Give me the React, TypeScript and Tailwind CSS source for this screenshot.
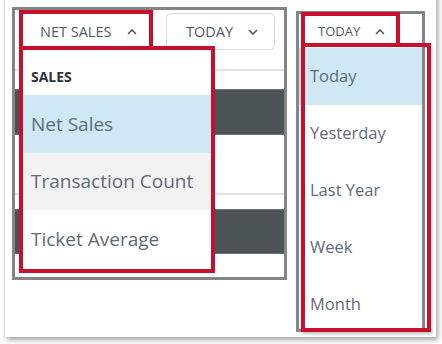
const RED = "border-[#c8102e]";

function ChevronUp({ className = "" }: { className?: string }) {
  return (
    <svg width="10" height="6" viewBox="0 0 10 6" className={className}>
      <polyline points="1,5 5,1 9,5" fill="none" stroke="currentColor" strokeWidth="1.6" />
    </svg>
  );
}

function ChevronDown({ className = "" }: { className?: string }) {
  return (
    <svg width="10" height="6" viewBox="0 0 10 6" className={className}>
      <polyline points="1,1 5,5 9,1" fill="none" stroke="currentColor" strokeWidth="1.6" />
    </svg>
  );
}

function SalesPanel() {
  return (
    <div className="relative w-[275px] h-[273px] shrink-0 border-[3px] border-[#858585] bg-white">
      {/* header with the two selectors */}
      <div className="h-[61px] border-b-2 border-[#e2e2e2] flex items-start pt-[3px]">
        <button className="w-[140px] h-[37px] flex items-center pl-[25px] gap-[16px] text-[14.5px] text-[#4f5864]">
          <span>NET SALES</span>
          <ChevronUp />
        </button>
        <button className="ml-[11px] w-[109px] h-[37px] flex items-center pl-[19px] gap-[15px] border border-[#d9d9d9] rounded-[5px] text-[14.5px] text-[#4f5864]">
          <span>TODAY</span>
          <ChevronDown />
        </button>
      </div>

      {/* table rows behind the menu */}
      <div className="h-[18px]" />
      <div className="h-[46px] bg-[#4b5355] border-y border-[#687286]" />
      <div className="h-[58px]" />
      <div className="h-[2px] bg-[#e2e2e2]" />
      <div className="h-[14px]" />
      <div className="h-[45px] bg-[#4b5355] border-y border-[#687286]" />

      {/* highlight around the open selector */}
      <div className={`absolute left-[4px] top-0 w-[134px] h-[40px] border-4 ${RED}`} />

      {/* open menu */}
      <div className={`absolute left-[4px] top-[36px] w-[196px] h-[227px] border-4 ${RED} bg-white flex flex-col`}>
        <div className="h-[45px] flex items-center pt-[7px] pl-[8px] text-[14px] font-bold text-[#2f3338]">
          SALES
        </div>
        <div className="h-[58px] flex items-center pl-[8px] bg-[#cfe9f4] text-[19px] text-[#5f6b78]">
          Net Sales
        </div>
        <div className="h-[57px] flex items-center pl-[8px] bg-[#f2f2f2] text-[19px] text-[#5f6b78]">
          Transaction Count
        </div>
        <div className="h-[58px] flex items-center pl-[8px] text-[19px] text-[#5f6b78]">
          Ticket Average
        </div>
      </div>
    </div>
  );
}

function PeriodPanel() {
  const items = ["Today", "Yesterday", "Last Year", "Week", "Month"];
  return (
    <div className="relative mt-[4px] w-[129px] h-[321px] shrink-0 border-[3px] border-[#858585] bg-white flex flex-col">
      <div className="h-[34px] shrink-0 flex items-center pt-[2px] pl-[19px] gap-[15px] text-[13px] text-[#4f5864]">
        <span>TODAY</span>
        <ChevronUp />
      </div>
      <div className="flex-1 overflow-hidden">
        {items.map((item, i) => (
          <div
            key={item}
            className={`h-[57px] flex items-center pl-[11px] text-[16.5px] text-[#5f6b78] ${i === 0 ? "bg-[#cfe9f4]" : ""}`}
          >
            {item}
          </div>
        ))}
      </div>

      <div className={`absolute left-[2px] top-[-2px] w-[99px] h-[35px] border-4 ${RED}`} />
      <div className={`absolute left-[2px] top-[29px] w-[130px] h-[289px] border-4 ${RED} shadow-[1px_2px_3px_rgba(0,0,0,0.25)]`} />
    </div>
  );
}

export default function App() {
  return (
    <div className="w-[442px] h-[344px] bg-white overflow-hidden font-['Open_Sans',sans-serif]">
      <div className="-mt-[10px] ml-[5px] w-[431px] h-[347px] bg-white shadow-[2px_3px_5px_rgba(0,0,0,0.35),-1px_0_2px_rgba(0,0,0,0.1)] flex items-start gap-[9px] pl-[7px] pt-[17px]">
        <SalesPanel />
        <PeriodPanel />
      </div>
    </div>
  );
}
